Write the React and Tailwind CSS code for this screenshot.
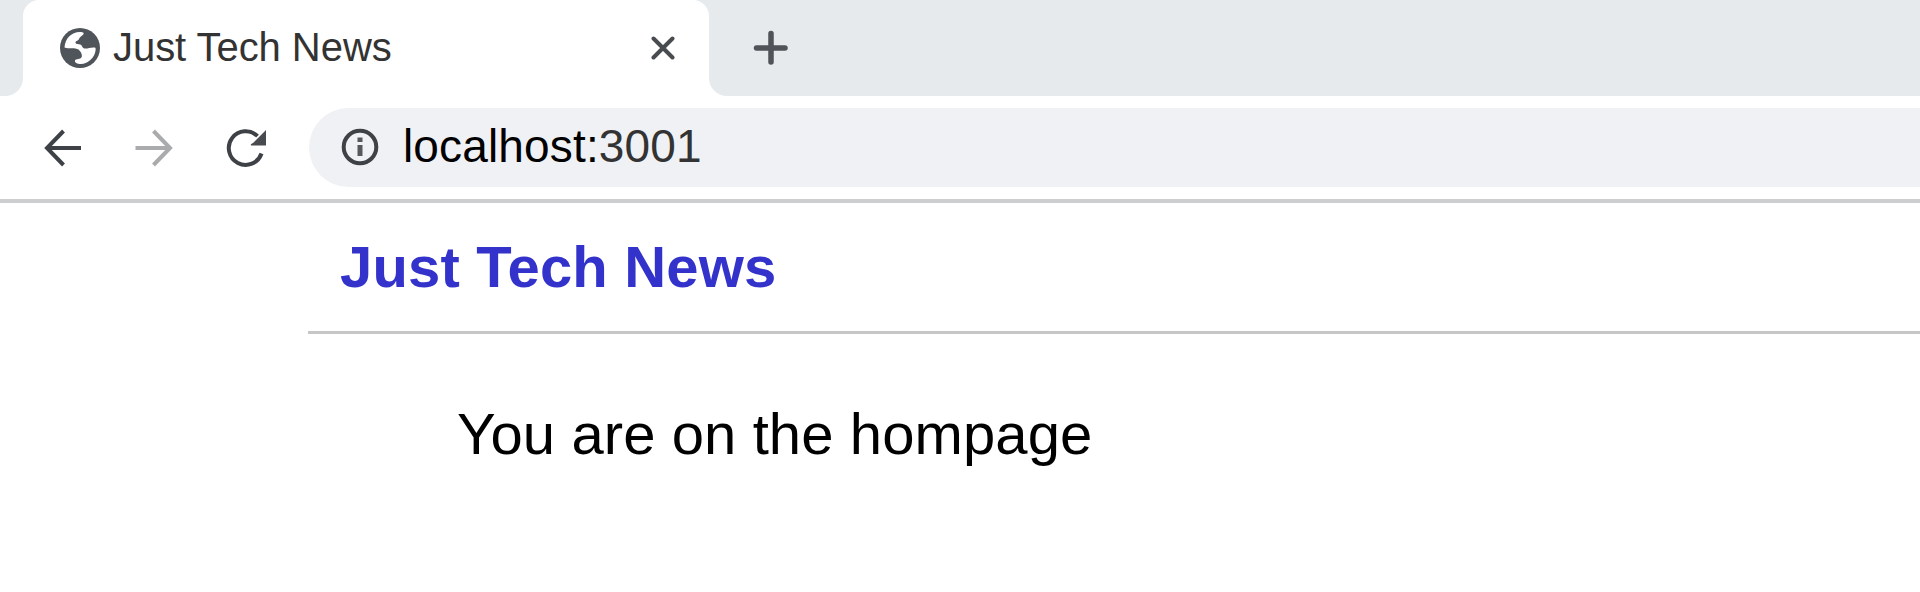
function GlobeIcon() {
  return (
    <svg className="h-10 w-10 shrink-0" viewBox="0 0 40 40" fill="none">
      <circle cx="20" cy="20" r="20" fill="#50555b" />
      <path
        d="M4.500 19.500C5 11 11 4 20 4C23.500 4 24.500 5 23 6.800C21.500 8.500 19.500 9 19 11C18.500 12.800 15.500 12.800 15.500 14.500C15.500 16.300 18 16 20 16.500C22.500 17.200 22 20 24.500 20.500C28 21 30 19 35 19.500C36 20 35.800 22 35 25C33 31 27.500 35.500 21 36C17 36 14.500 34.500 15 32.500C15.800 30.500 20.500 32 21.800 28.800C22.300 26.500 21 23.500 18.500 21.500C15 19.500 9 21.300 4.500 19.500Z"
        fill="#fff"
      />
    </svg>
  );
}

function TabStrip() {
  return (
    <div className="flex h-24 bg-white">
      <div className="h-24 w-[23px] rounded-br-[18px] bg-[#e6eaed]" />
      <div className="h-24 w-[686px] bg-[#e6eaed]">
        <div className="flex h-24 items-center rounded-t-[16px] bg-white pl-[37px]">
          <GlobeIcon />
          <span className="ml-[13px] w-[538px] pb-[2px] text-[40px] leading-[48px] tracking-[-0.05px] whitespace-nowrap text-[#333]">
            Just Tech News
          </span>
          <svg className="h-6 w-6 shrink-0" viewBox="0 0 24 24" stroke="#484c50" strokeWidth="4" strokeLinecap="round">
            <path d="M2.500 2.500L21.500 21.500M21.500 2.500L2.500 21.500" />
          </svg>
        </div>
      </div>
      <div className="flex flex-1 items-center rounded-bl-[18px] bg-[#e6eaed] pl-[44px]">
        <svg className="h-9 w-9" viewBox="0 0 36 36" stroke="#505459" strokeWidth="5.5" strokeLinecap="round">
          <path d="M3.500 18H32M18 3.500V32" />
        </svg>
      </div>
    </div>
  );
}

function Toolbar() {
  return (
    <div className="flex h-[107px] items-start border-b-[4px] border-[#cdcecf] pt-[11.500px]">
      <div className="flex h-20 w-[309px] items-center pl-[44px]">
        <svg className="h-[38px] w-[38px]" viewBox="0 0 38 38" fill="none" stroke="#3e4247" strokeWidth="4">
          <path d="M37 19H3M19.500 2L3 19L19.500 36" />
        </svg>
        <svg className="ml-[53px] h-[38px] w-[38px]" viewBox="0 0 38 38" fill="none" stroke="#a9abad" strokeWidth="4">
          <path d="M0.500 19H35M18.500 2L35 19L18.500 36" />
        </svg>
        <svg className="ml-[53px] h-10 w-10" viewBox="0 0 40 40" fill="none">
          <path d="M35.500 25.500A16.800 16.800 0 1 1 31.500 8.200" stroke="#3e4247" strokeWidth="4" />
          <path d="M40 2V17.500H25C24.500 16.500 25 15.800 27 15Z" fill="#484c51" />
        </svg>
      </div>
      <div className="flex h-[79px] flex-1 items-center rounded-l-full bg-[#f0f1f4] pl-[32px]">
        <svg className="h-[38px] w-[38px]" viewBox="0 0 38 38" fill="none">
          <circle cx="19" cy="19" r="16.300" stroke="#3e4145" strokeWidth="4" />
          <path d="M19 17V28M19 9.500V14" stroke="#55585c" strokeWidth="5" />
        </svg>
        <span className="ml-[24px] pb-[2px] text-[46px] leading-[54px] tracking-[0.15px] whitespace-nowrap text-black">
          localhost:<span className="text-[#333]">3001</span>
        </span>
      </div>
    </div>
  );
}

export default function App() {
  return (
    <div className="flex h-[592px] w-full flex-col overflow-hidden bg-white font-['Liberation_Sans',Arial,sans-serif]">
      <TabStrip />
      <Toolbar />
      <main className="ml-[308px] flex-1">
        <header className="h-[131px] border-b-[3px] border-[#c6c6c6] pt-[31px] pl-[32px]">
          <h1 className="text-[58px] leading-[66px] font-bold tracking-[0.17px] whitespace-nowrap text-[#3333cc]">Just Tech News</h1>
        </header>
        <p className="pt-[67px] pl-[149px] text-[58px] leading-[66px] tracking-[0.1px] whitespace-nowrap text-black">
          You are on the hompage
        </p>
      </main>
    </div>
  );
}
